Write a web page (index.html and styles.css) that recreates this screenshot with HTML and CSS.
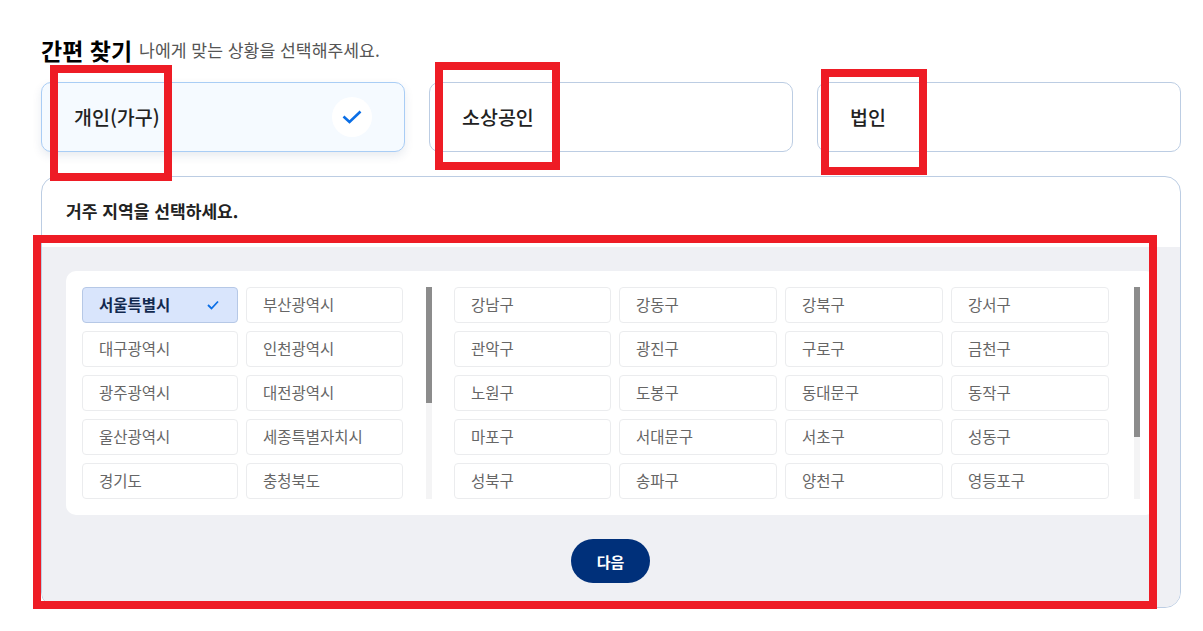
FILE: index.html
```html
<!DOCTYPE html>
<html lang="ko">
<head>
<meta charset="utf-8">
<title>간편 찾기</title>
<link rel="stylesheet" href="styles.css">
</head>
<body>
<main class="page">
  <header class="title-row">
    <h1 class="title">간편 찾기</h1>
    <p class="subtitle">나에게 맞는 상황을 선택해주세요.</p>
  </header>
  <section class="types">
    <div class="type type-on">
      <span>개인(가구)</span>
      <span class="type-check">
        <svg width="20" height="20" viewBox="0 0 20 20"><path d="M1.5 9.5 L7.5 15 L18.5 4.5" fill="none" stroke="#0a6ee6" stroke-width="2.6"/></svg>
      </span>
    </div>
    <div class="type"><span>소상공인</span></div>
    <div class="type"><span>법인</span></div>
  </section>
  <section class="panel">
    <h2 class="panel-head">거주 지역을 선택하세요.</h2>
    <div class="panel-body">
      <div class="picker">
        <div class="grid grid-city">
          <div class="opt opt-on">서울특별시
            <svg class="opt-check" width="12" height="10" viewBox="0 0 12 10"><path d="M1 5 L4.5 8.5 L11 1.5" fill="none" stroke="#0a6ee6" stroke-width="1.8"/></svg>
          </div>
          <div class="opt">부산광역시</div>
          <div class="opt">대구광역시</div>
          <div class="opt">인천광역시</div>
          <div class="opt">광주광역시</div>
          <div class="opt">대전광역시</div>
          <div class="opt">울산광역시</div>
          <div class="opt">세종특별자치시</div>
          <div class="opt">경기도</div>
          <div class="opt">충청북도</div>
        </div>
        <div class="scroll"><div class="thumb thumb-city"></div></div>
        <div class="grid grid-gu">
          <div class="opt">강남구</div>
          <div class="opt">강동구</div>
          <div class="opt">강북구</div>
          <div class="opt">강서구</div>
          <div class="opt">관악구</div>
          <div class="opt">광진구</div>
          <div class="opt">구로구</div>
          <div class="opt">금천구</div>
          <div class="opt">노원구</div>
          <div class="opt">도봉구</div>
          <div class="opt">동대문구</div>
          <div class="opt">동작구</div>
          <div class="opt">마포구</div>
          <div class="opt">서대문구</div>
          <div class="opt">서초구</div>
          <div class="opt">성동구</div>
          <div class="opt">성북구</div>
          <div class="opt">송파구</div>
          <div class="opt">양천구</div>
          <div class="opt">영등포구</div>
        </div>
        <div class="scroll"><div class="thumb thumb-gu"></div></div>
      </div>
      <button class="next" type="button">다음</button>
    </div>
  </section>
</main>
<div class="mark mark-1"></div>
<div class="mark mark-2"></div>
<div class="mark mark-3"></div>
<div class="mark mark-4"></div>
</body>
</html>
```
FILE: styles.css
```css
* { box-sizing: border-box; }
html, body { margin: 0; padding: 0; background: #fff; }
body {
  position: relative;
  height: 631px;
  overflow: hidden;
  font-family: "Noto Sans CJK KR", "Noto Sans", sans-serif;
  color: #111;
}
.page { width: 1140px; margin-left: 41px; padding-top: 34px; }
.title-row { display: flex; align-items: center; gap: 7px; height: 32px; margin-bottom: 16px; }
.title { margin: 0; font-size: 23px; font-weight: 700; color: #000; line-height: 32px; }
.subtitle { margin: 0; font-size: 17.2px; font-weight: 400; color: #555; line-height: 24px; }
.types { display: flex; gap: 24px; margin-bottom: 24px; }
.type {
  flex: 1;
  height: 70px;
  display: flex;
  align-items: center;
  justify-content: space-between;
  padding: 0 32px;
  background: #fff;
  border: 1px solid #bccde3;
  border-radius: 10px;
  font-size: 19.5px;
  font-weight: 500;
  color: #222;
}
.type > span:first-child { margin-bottom: 2px; }
.type-on {
  background: #f5faff;
  border-color: #a9cdf5;
  box-shadow: 0 4px 10px rgba(30, 60, 110, .1);
}
.type-check {
  width: 40px;
  height: 40px;
  border-radius: 50%;
  background: #fff;
  display: flex;
  align-items: center;
  justify-content: center;
}
.panel {
  height: 432px;
  border: 1px solid #bccde3;
  border-radius: 16px;
  overflow: hidden;
  display: flex;
  flex-direction: column;
}
.panel-head {
  margin: 0;
  height: 70px;
  padding: 0 24px 3px;
  display: flex;
  align-items: center;
  font-size: 17.1px;
  font-weight: 700;
  color: #222;
}
.panel-body {
  flex: 1;
  background: #eff0f4;
  padding: 24px 24px 0;
  display: flex;
  flex-direction: column;
  align-items: center;
}
.picker {
  align-self: stretch;
  height: 244px;
  padding: 16px;
  background: #fff;
  border-radius: 10px;
  display: flex;
}
.grid { display: grid; gap: 8px; grid-auto-rows: 36px; height: 212px; overflow: hidden; }
.grid-city { width: 321px; grid-template-columns: 156px 157px; }
.grid-gu { width: 655px; margin-left: 22px; grid-template-columns: 157px 158px 158px 158px; }
.scroll { width: 6px; height: 212px; margin-left: 23px; background: #f4f4f5; }
.grid-gu + .scroll { margin-left: 25px; }
.thumb { width: 100%; background: #8c8c8c; }
.thumb-city { height: 116px; }
.thumb-gu { height: 150px; }
.opt {
  display: flex;
  align-items: center;
  justify-content: space-between;
  padding: 0 18px 2px 16px;
  border: 1px solid #ebecee;
  border-radius: 4px;
  background: #fff;
  font-size: 15.5px;
  font-weight: 400;
  color: #666;
}
.opt-on {
  background: #d9e5fc;
  border-color: #b6c8e6;
  font-weight: 700;
  color: #12294f;
}
.opt-check { margin-top: 2px; }
.next {
  margin-top: 24px;
  margin-right: 1px;
  width: 79px;
  height: 44px;
  border: 0;
  border-radius: 22px;
  background: #00307a;
  color: #fff;
  font-family: inherit;
  font-size: 15px;
  font-weight: 700;
}
.mark { position: absolute; border: 8px solid #ee1c25; }
.mark-1 { left: 50px; top: 65px; width: 122px; height: 116px; }
.mark-2 { left: 435px; top: 62px; width: 125px; height: 108px; }
.mark-3 { left: 821px; top: 69px; width: 106px; height: 106px; }
.mark-4 { left: 33px; top: 235px; width: 1124px; height: 374px; }
```
